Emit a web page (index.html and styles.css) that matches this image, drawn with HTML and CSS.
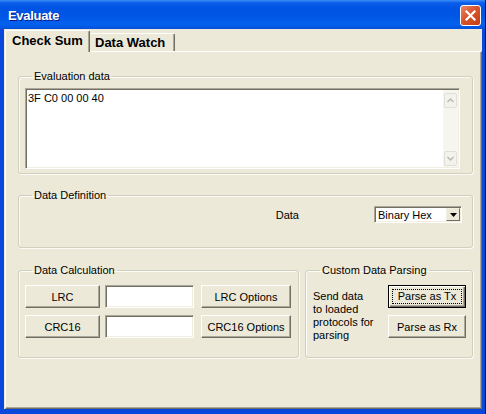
FILE: index.html
```html
<!DOCTYPE html>
<html lang="en">
<head>
  <meta charset="UTF-8" />
  <title>Evaluate</title>
  <link rel="stylesheet" href="styles.css">
</head>
<body>
  <div class="window">
    <div class="titlebar">
      <span class="title">Evaluate</span>
      <span class="close-btn">
        <svg width="11" height="11" viewBox="0 0 11 11"><path d="M1.5 1.5 L9.5 9.5 M9.5 1.5 L1.5 9.5" stroke="#fff" stroke-width="2.2" stroke-linecap="square"/></svg>
      </span>
    </div>

    <div class="client">
      <div class="tabs">
        <div class="tab active">Check Sum</div>
        <div class="tab">Data Watch</div>
      </div>

      <div class="panel">
        <fieldset class="group">
          <legend>Evaluation data</legend>
          <div class="textbox">
            <div class="textbox-text">3F C0 00 00 40</div>
            <div class="scrollbar">
              <span class="sb-btn">
                <svg width="7" height="5" viewBox="0 0 7 5"><path d="M0.5 4 L3.5 1 L6.5 4" fill="none" stroke="#b9b7ae" stroke-width="1.4"/></svg>
              </span>
              <span class="sb-btn">
                <svg width="7" height="5" viewBox="0 0 7 5"><path d="M0.5 1 L3.5 4 L6.5 1" fill="none" stroke="#b9b7ae" stroke-width="1.4"/></svg>
              </span>
            </div>
          </div>
        </fieldset>

        <fieldset class="group def-group">
          <legend>Data Definition</legend>
          <div class="def-row">
            <span>Data</span>
            <div class="combo">
              <span class="combo-text">Binary Hex</span>
              <span class="combo-btn">
                <svg width="7" height="4" viewBox="0 0 7 4"><path d="M0 0 H7 L3.5 4 Z" fill="#000"/></svg>
              </span>
            </div>
          </div>
        </fieldset>

        <div class="bottom-row">
          <fieldset class="group calc-group">
            <legend>Data Calculation</legend>
            <div class="calc-row">
              <button class="btn btn-calc">LRC</button>
              <div class="field"></div>
              <button class="btn btn-opt">LRC Options</button>
            </div>
            <div class="calc-row">
              <button class="btn btn-calc">CRC16</button>
              <div class="field"></div>
              <button class="btn btn-opt">CRC16 Options</button>
            </div>
          </fieldset>

          <fieldset class="group parse-group">
            <legend>Custom Data Parsing</legend>
            <div class="parse-body">
              <p class="parse-text">Send data<br>to loaded<br>protocols for<br>parsing</p>
              <div class="parse-btns">
                <button class="btn btn-parse default"><span class="focus">Parse as Tx</span></button>
                <button class="btn btn-parse">Parse as Rx</button>
              </div>
            </div>
          </fieldset>
        </div>
      </div>
    </div>
  </div>
</body>
</html>
```

FILE: styles.css
```css
body {
  margin: 0;
  font-family: "Liberation Sans", Arial, sans-serif;
  font-size: 11px;
  color: #000;
  background: #fff;
}

.window {
  width: 486px;
  height: 414px;
  display: flex;
  flex-direction: column;
  background: #0a48dc;
  border-right: 1px solid #00138c;
  box-sizing: border-box;
}

/* title bar */

.titlebar {
  height: 29px;
  flex: none;
  display: flex;
  align-items: center;
  justify-content: space-between;
  padding: 0 4px 0 8px;
  background: linear-gradient(#3b8cf7 0, #0a5ee8 3px, #0054e3 8px, #0055e5 50%, #0461ee 85%, #0650d8 100%);
}

.title {
  color: #fff;
  font-weight: bold;
  font-size: 13px;
  letter-spacing: -0.3px;
  text-shadow: 1px 1px 0 #0a1e8a;
  margin-top: 1px;
}

.close-btn {
  width: 19px;
  height: 19px;
  border: 1px solid #fff;
  border-radius: 3px;
  background: linear-gradient(135deg, #e9866a 0, #d9542c 45%, #c53d15 100%);
  display: flex;
  align-items: center;
  justify-content: center;
  margin-top: 2px;
}

/* client area */

.client {
  flex: 1;
  display: flex;
  flex-direction: column;
  background: #ece9d8;
  margin: 0 3px 5px 4px;
}

.tabs {
  display: flex;
  align-items: flex-end;
  height: 21px;
  margin-top: 1px;
  padding-left: 1px;
  position: relative;
  z-index: 1;
}

.tab {
  box-sizing: border-box;
  height: 18px;
  width: 85px;
  padding-left: 5px;
  font-size: 13px;
  font-weight: bold;
  line-height: 17px;
  background: #ece9d8;
  border-top: 1px solid #fff;
  border-right: 1px solid #716f64;
  border-radius: 2px 2px 0 0;
  box-shadow: inset -1px 0 0 #aca899;
}

.tab.active {
  height: 22px;
  width: 85px;
  margin-bottom: -1px;
  padding-left: 6px;
  line-height: 19px;
  border-left: 1px solid #fff;
}

.panel {
  flex: 1;
  margin-left: 1px;
  padding: 18px 8px 0 12px;
  border-top: 1px solid #fff;
  border-left: 1px solid #fff;
  border-right: 1px solid #716f64;
  border-bottom: 1px solid #716f64;
  box-shadow: inset -1px -1px 0 #aca899;
}

/* group boxes */

.group {
  margin: 0;
  min-width: 0;
  padding: 5px 12px 4px 6px;
  border: 1px solid #d0d0bf;
  border-radius: 3px;
  box-shadow: 1px 1px 0 #fbfaf6, inset 1px 1px 0 #fbfaf6;
}

.group legend {
  margin-left: 7px;
  padding: 0 2px;
  line-height: 13px;
}

.textbox {
  height: 81px;
  display: flex;
  background: #fff;
  box-sizing: border-box;
  border: 1px solid;
  border-color: #aca899 #fff #fff #aca899;
  box-shadow: inset 1px 1px 0 #716f64, inset -1px -1px 0 #f1efe2;
}

.textbox-text {
  flex: 1;
  padding: 3px 0 0 2px;
}

.scrollbar {
  width: 15px;
  margin: 1px 1px 1px 0;
  background: #f6f5f0;
  display: flex;
  flex-direction: column;
  justify-content: space-between;
  padding: 3px 0 1px;
}

.sb-btn {
  height: 13px;
  margin: 0 1px;
  border: 1px solid #e2e0d6;
  border-radius: 2px;
  background: #f3f2ec;
  display: flex;
  align-items: center;
  justify-content: center;
}

.def-group {
  margin-top: 15px;
  padding: 4px 10px 24px 6px;
}

.def-row {
  display: flex;
  align-items: center;
  justify-content: flex-end;
  gap: 75px;
}

.combo {
  width: 88px;
  height: 17px;
  box-sizing: border-box;
  display: flex;
  align-items: center;
  background: #fff;
  border: 1px solid;
  border-color: #aca899 #fff #fff #aca899;
  box-shadow: inset 1px 1px 0 #716f64, inset -1px -1px 0 #f1efe2;
  padding: 1px 1px 1px 3px;
}

.combo-text {
  flex: 1;
}

.combo-btn {
  width: 14px;
  height: 13px;
  box-sizing: border-box;
  display: flex;
  align-items: center;
  justify-content: center;
  background: #ece9d8;
  border: 1px solid;
  border-color: #f1efe2 #716f64 #716f64 #f1efe2;
}

.bottom-row {
  display: flex;
  gap: 6px;
  margin-top: 16px;
}

.calc-group {
  width: 281px;
  box-sizing: border-box;
  padding: 8px 7px 15px 6px;
}

.calc-row {
  display: flex;
  gap: 5px;
}

.calc-row + .calc-row {
  margin-top: 7px;
}

.btn {
  box-sizing: border-box;
  height: 23px;
  margin: 0;
  padding: 0;
  font-family: inherit;
  font-size: 11px;
  color: #000;
  background: #ece9d8;
  border: 1px solid;
  border-color: #fff #716f64 #716f64 #fff;
  box-shadow: inset -1px -1px 0 #aca899;
}

.btn-calc {
  width: 75px;
}

.btn-opt {
  width: 90px;
  margin-left: 2px;
}

.field {
  width: 89px;
  height: 23px;
  box-sizing: border-box;
  background: #fff;
  border: 1px solid;
  border-color: #aca899 #fff #fff #aca899;
  box-shadow: inset 1px 1px 0 #716f64, inset -1px -1px 0 #f1efe2;
}

.parse-group {
  flex: 1;
  padding: 8px 6px 15px 7px;
}

.parse-body {
  display: flex;
  justify-content: space-between;
}

.parse-text {
  margin: 5px 0 0;
  line-height: 13px;
}

.parse-btns {
  display: flex;
  flex-direction: column;
  gap: 7px;
}

.btn-parse {
  width: 78px;
}

.btn.default {
  border: 1px solid #000;
  box-shadow: inset 1px 1px 0 #fff, inset -1px -1px 0 #716f64, inset -2px -2px 0 #aca899;
  padding: 3px;
}

.focus {
  display: block;
  height: 100%;
  box-sizing: border-box;
  border: 1px dotted #000;
  line-height: 13px;
}
```
